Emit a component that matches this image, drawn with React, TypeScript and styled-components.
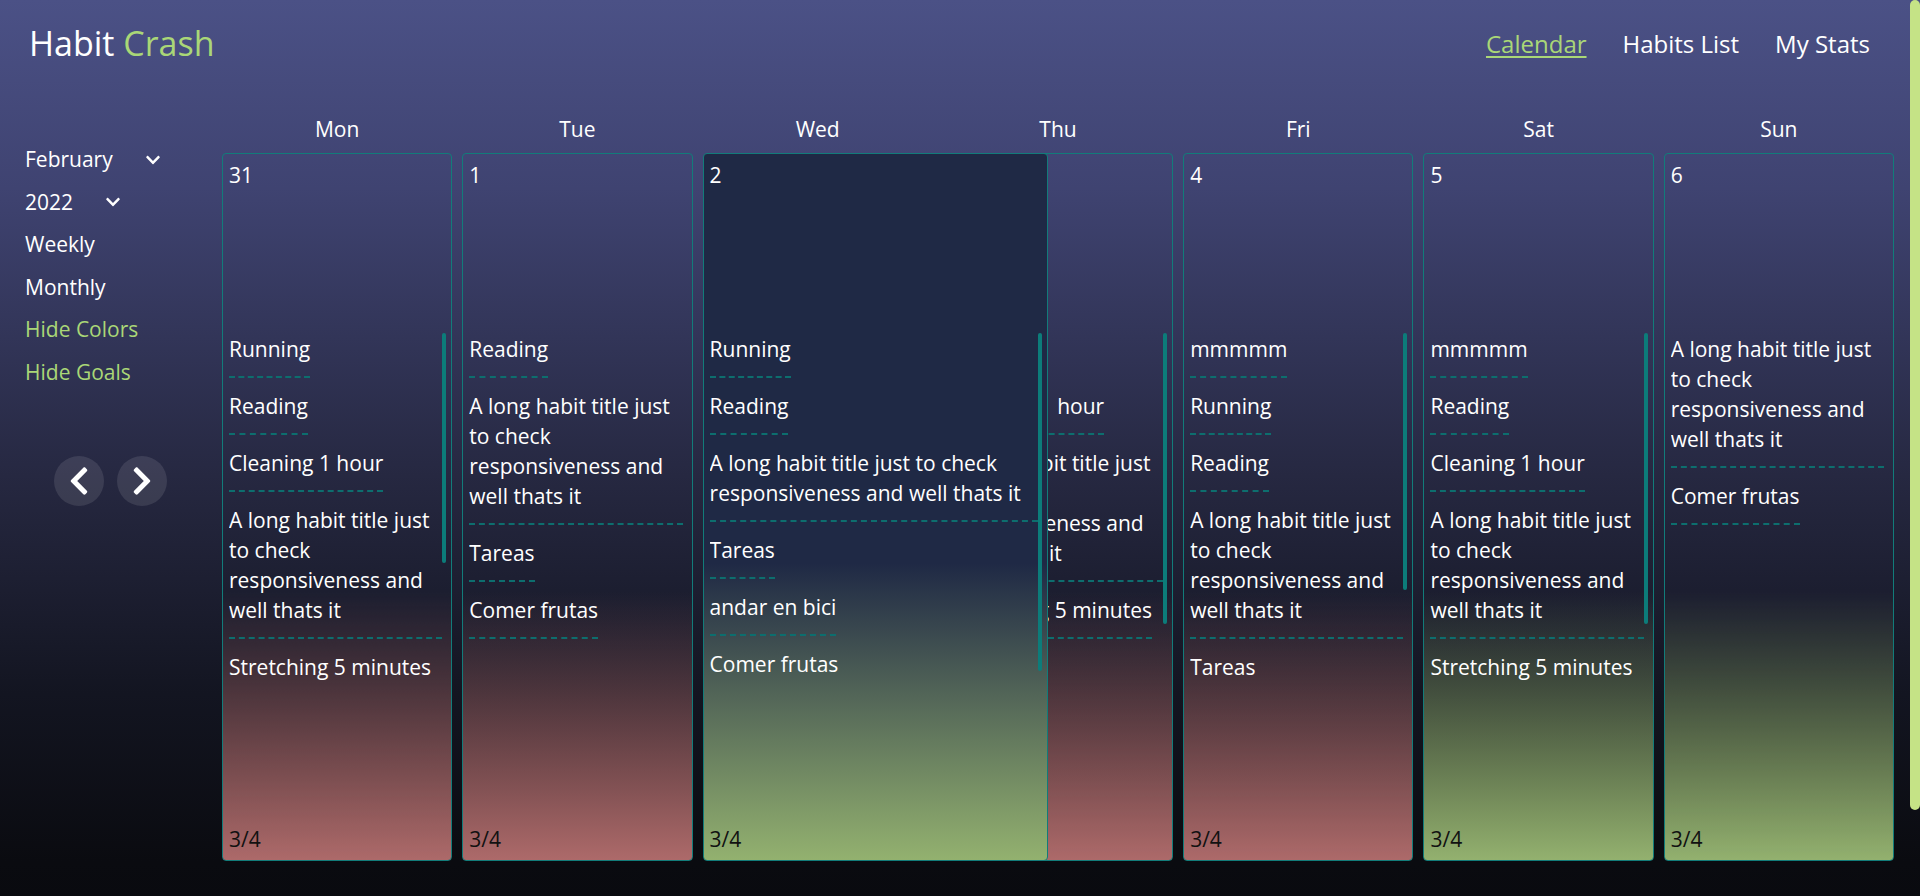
import React, { useLayoutEffect, useRef, useState } from "react";
import styled, { createGlobalStyle } from "styled-components";
import { FaChevronDown, FaChevronLeft, FaChevronRight } from "react-icons/fa";

const GREEN = "#aad777";

const GlobalStyle = createGlobalStyle`
  * {
    box-sizing: border-box;
  }

  html {
    background: #08090c;
    scrollbar-width: none;
  }

  body {
    margin: 0;
    font-family: "Open Sans", "Noto Sans", sans-serif;
    color: #f5f5f7;
  }
`;

type Status = "good" | "bad";

interface Day {
  name: string;
  date: string;
  status: Status;
  active?: boolean;
  habits: string[];
}

const LONG = "A long habit title just to check responsiveness and well thats it";

const days: Day[] = [
  {
    name: "Mon",
    date: "31",
    status: "bad",
    habits: [
      "Running",
      "Reading",
      "Cleaning 1 hour",
      LONG,
      "Stretching 5 minutes",
      "Tareas",
      "andar en bici",
      "Comer frutas",
    ],
  },
  {
    name: "Tue",
    date: "1",
    status: "bad",
    habits: ["Reading", LONG, "Tareas", "Comer frutas"],
  },
  {
    name: "Wed",
    date: "2",
    status: "good",
    active: true,
    habits: ["Running", "Reading", LONG, "Tareas", "andar en bici", "Comer frutas"],
  },
  {
    name: "Thu",
    date: "3",
    status: "bad",
    habits: [
      "Running",
      "Cleaning 1 hour",
      LONG,
      "Stretching 5 minutes",
      "Tareas",
      "Comer frutas",
    ],
  },
  {
    name: "Fri",
    date: "4",
    status: "bad",
    habits: [
      "mmmmm",
      "Running",
      "Reading",
      LONG,
      "Tareas",
      "andar en bici",
      "Comer frutas",
    ],
  },
  {
    name: "Sat",
    date: "5",
    status: "good",
    habits: [
      "mmmmm",
      "Reading",
      "Cleaning 1 hour",
      LONG,
      "Stretching 5 minutes",
      "Comer frutas",
    ],
  },
  {
    name: "Sun",
    date: "6",
    status: "good",
    habits: [LONG, "Comer frutas"],
  },
];

// thumb length of a scroll box: visible / total, scaled to the visible height
const thumbSize = (visible: number, total: number) =>
  total > visible + 1 ? (visible * visible) / total : 0;

function HabitScroller({ habits }: { habits: string[] }) {
  const listRef = useRef<HTMLUListElement>(null);
  const [thumb, setThumb] = useState(0);

  useLayoutEffect(() => {
    const el = listRef.current;
    if (el) setThumb(thumbSize(el.clientHeight, el.scrollHeight));
  }, [habits]);

  return (
    <ScrollArea>
      <HabitList ref={listRef}>
        {habits.map((habit, i) => (
          <Habit key={i}>{habit}</Habit>
        ))}
      </HabitList>
      <CardTrack>{thumb > 0 && <CardThumb style={{ height: thumb }} />}</CardTrack>
    </ScrollArea>
  );
}

function PageScrollbar() {
  const [thumb, setThumb] = useState(0);

  useLayoutEffect(() => {
    const doc = document.documentElement;
    setThumb(thumbSize(window.innerHeight, doc.scrollHeight));
  }, []);

  return (
    <PageTrack>{thumb > 0 && <PageThumb style={{ height: thumb }} />}</PageTrack>
  );
}

function App() {
  return (
    <Page>
      <GlobalStyle />
      <Content>
        <Header>
          <Logo>
            Habit <span>Crash</span>
          </Logo>
          <Nav>
            <NavLink $active>Calendar</NavLink>
            <NavLink>Habits List</NavLink>
            <NavLink>My Stats</NavLink>
          </Nav>
        </Header>

        <Main>
          <Sidebar>
            <Options>
              <Dropdown>
                February
                <FaChevronDown size={16} />
              </Dropdown>
              <Dropdown>
                2022
                <FaChevronDown size={16} />
              </Dropdown>
              <Option>Weekly</Option>
              <Option>Monthly</Option>
              <Option $accent>Hide Colors</Option>
              <Option $accent>Hide Goals</Option>
            </Options>
            <Arrows>
              <ArrowButton aria-label="previous week">
                <FaChevronLeft size={32} />
              </ArrowButton>
              <ArrowButton aria-label="next week">
                <FaChevronRight size={32} />
              </ArrowButton>
            </Arrows>
          </Sidebar>

          <Calendar>
            {days.map((day) => (
              <DayName key={day.name}>{day.name}</DayName>
            ))}
            {days.map((day) => (
              <DayCard key={day.date} $status={day.status} $active={day.active}>
                <DayNumber>{day.date}</DayNumber>
                <HabitScroller habits={day.habits} />
                <Counter>3/4</Counter>
              </DayCard>
            ))}
          </Calendar>
        </Main>
      </Content>
      <PageScrollbar />
    </Page>
  );
}

const Page = styled.div`
  display: flex;
  align-items: flex-start;
  min-height: 991px;
  background: linear-gradient(
    180deg,
    #4b5186 0%,
    #3f4371 19%,
    #262841 48%,
    #131521 70%,
    #0a0b10 87%,
    #07080b 100%
  );
`;

const Content = styled.div`
  flex: 1;
  min-width: 0;
`;

const PageTrack = styled.div`
  position: sticky;
  top: 0;
  width: 10px;
  height: 100vh;
  flex-shrink: 0;
`;

const PageThumb = styled.div`
  width: 100%;
  background: #c5e386;
  border-radius: 5px;
`;

const Header = styled.header`
  height: 86px;
  padding: 0 40px 0 29px;
  display: flex;
  align-items: center;
  justify-content: space-between;
`;

const Logo = styled.h1`
  margin: 0;
  font-size: 34px;
  font-weight: 400;
  color: #ffffff;

  span {
    color: ${GREEN};
  }
`;

const Nav = styled.nav`
  display: flex;
  align-items: center;
  gap: 36px;
`;

const NavLink = styled.a<{ $active?: boolean }>`
  font-size: 24px;
  cursor: pointer;
  color: ${(p) => (p.$active ? GREEN : "#ffffff")};
  text-decoration: ${(p) => (p.$active ? "underline" : "none")};
  text-underline-offset: 3px;
`;

const Main = styled.main`
  display: flex;
  padding: 0 16px 0 25px;
`;

const Sidebar = styled.aside`
  width: 197px;
  flex-shrink: 0;
  padding-top: 58px;
`;

const Options = styled.div`
  display: flex;
  flex-direction: column;
  gap: 12.5px;
`;

const Option = styled.div<{ $accent?: boolean }>`
  font-size: 21px;
  line-height: 30px;
  cursor: pointer;
  color: ${(p) => (p.$accent ? GREEN : "#ffffff")};
`;

const Dropdown = styled(Option)`
  display: flex;
  align-items: center;
  gap: 32px;

  svg {
    margin-top: 1px;
  }
`;

const Arrows = styled.div`
  display: flex;
  gap: 13px;
  margin: 69px 0 0 29px;
`;

const ArrowButton = styled.button`
  width: 50px;
  height: 50px;
  padding: 0;
  border: none;
  border-radius: 50%;
  background: rgba(255, 255, 255, 0.1);
  color: #ffffff;
  display: flex;
  align-items: center;
  justify-content: center;
  cursor: pointer;
`;

const Calendar = styled.section`
  flex: 1;
  padding-top: 28px;
  display: grid;
  grid-template-columns: repeat(7, 1fr);
  column-gap: 10px;
  row-gap: 9px;
`;

const DayName = styled.div`
  font-size: 21px;
  line-height: 30px;
  text-align: center;
  color: #ffffff;
`;

const cardFill = (status: Status, active?: boolean) => {
  const color = status === "good" ? "#93b16f" : "#ad6a6a";
  if (active) {
    return `linear-gradient(180deg, #1f2945 0%, #1f2945 58%, ${color} 100%)`;
  }
  return `linear-gradient(180deg, transparent 0%, transparent 62%, ${color} 100%)`;
};

const DayCard = styled.div<{ $status: Status; $active?: boolean }>`
  position: relative;
  z-index: ${(p) => (p.$active ? 2 : 1)};
  width: ${(p) => (p.$active ? "150%" : "100%")};
  height: 708px;
  padding: 6px 5px 6px 6px;
  border: 1px solid #127c7a;
  border-radius: 4px;
  display: flex;
  flex-direction: column;
  background: ${(p) => cardFill(p.$status, p.$active)};
`;

const DayNumber = styled.div`
  font-size: 21px;
  line-height: 30px;
  color: #ffffff;
`;

const ScrollArea = styled.div`
  display: flex;
  height: 355px;
  margin-top: 143px;
`;

const HabitList = styled.ul`
  flex: 1;
  min-width: 0;
  list-style: none;
  margin: 0;
  padding: 1px 0 0;
  overflow-y: auto;
  scrollbar-width: none;
`;

const CardTrack = styled.div`
  width: 4px;
  flex-shrink: 0;
`;

const CardThumb = styled.div`
  width: 100%;
  background: #0c7c7a;
  border-radius: 2px;
`;

const Habit = styled.li`
  width: fit-content;
  font-size: 21px;
  line-height: 30px;
  padding-bottom: 12px;
  margin-bottom: 13px;
  border-bottom: 2px dashed #0d6e6e;
  color: #ffffff;
`;

const Counter = styled.div`
  margin-top: auto;
  font-size: 21px;
  line-height: 30px;
  color: #111111;
`;

export default App;
